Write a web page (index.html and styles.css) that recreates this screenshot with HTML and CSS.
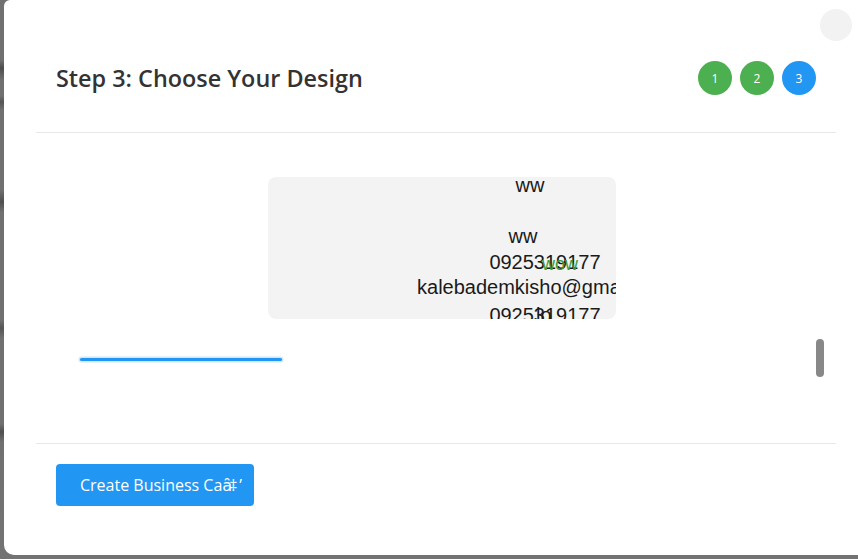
FILE: index.html
```html
<!DOCTYPE html>
<html>
<head>
<meta charset="utf-8">
<link rel="stylesheet" href="styles.css">
</head>
<body>
<div class="backdrop">
  <div class="modal">
    <button class="close" aria-label="Close"></button>
    <div class="header">
      <h2 class="title">Step 3: Choose Your Design</h2>
      <div class="steps">
        <span class="step done">1</span>
        <span class="step done">2</span>
        <span class="step active">3</span>
      </div>
    </div>
    <div class="body">
      <div class="preview-wrap">
        <div class="card">
          <div class="card-text">
            <div class="ln ln-a">ww</div>
            <div class="ln">&nbsp;</div>
            <div class="ln ln-b">ww</div>
            <div class="ln">0925319177</div>
            <div class="ln">kalebademkisho@gmail.com</div>
            <div class="ln ln-last">0925319177</div>
          </div>
          <span class="overlay wow">wow</span>
          <span class="overlay lo">lo</span>
        </div>
      </div>
      <div class="progress-row">
        <div class="progress"></div>
        <div class="thumb"></div>
      </div>
    </div>
    <div class="footer">
      <button class="create">Create Business Ca<span class="garble">ȃ</span><span class="garble2">‡</span>ʼ</button>
    </div>
  </div>
</div>
</body>
</html>
```
FILE: styles.css
```css
* { box-sizing: border-box; }
html, body { margin: 0; padding: 0; }
body {
  width: 858px;
  height: 559px;
  overflow: hidden;
  font-family: "Open Sans", "DejaVu Sans", sans-serif;
}
.backdrop {
  height: 559px;
  background: linear-gradient(to bottom,
    #707070 0, #707070 60px, #4d4d4d 68px, #707070 80px,
    #707070 96px, #555 102px, #707070 110px,
    #707070 190px, #4f4f4f 202px, #707070 212px,
    #707070 320px, #555 328px, #707070 338px,
    #707070 424px, #4f4f4f 432px, #707070 442px, #737373 559px);
  padding-left: 4px;
}
.modal {
  position: relative;
  width: 864px;
  height: 555px;
  background: #fff;
  border-radius: 6px 0 0 10px;
  padding: 24px 32px 0 32px;
}
.close {
  position: absolute;
  top: 9px;
  right: 16px;
  width: 32px;
  height: 32px;
  border: 0;
  border-radius: 50%;
  background: #f2f2f2;
  padding: 0;
}
.header {
  display: flex;
  align-items: center;
  justify-content: space-between;
  padding: 37px 20px;
  border-bottom: 1px solid #e8e8e8;
}
.title {
  margin: 0;
  font-size: 23.4px;
  font-weight: 600;
  color: #333;
  line-height: 34px;
}
.steps {
  display: flex;
  gap: 8px;
}
.step {
  width: 34px;
  height: 34px;
  border-radius: 50%;
  color: #fff;
  font-size: 12px;
  display: flex;
  align-items: center;
  justify-content: center;
}
.step.done { background: #4caf50; }
.step.active { background: #2196f3; }
.body {
  height: 311px;
  padding-top: 44px;
  border-bottom: 1px solid #e8e8e8;
}
.preview-wrap {
  display: flex;
  padding-left: 232px;
}
.card {
  position: relative;
  width: 348px;
  height: 142px;
  background: #f3f3f3;
  border-radius: 8px;
  overflow: hidden;
}
.card-text {
  width: 554px;
  margin-top: -4px;
  text-align: center;
  font-family: "Liberation Sans", Arial, sans-serif;
  font-size: 20px;
  line-height: 25.5px;
  color: #1a1a1a;
  white-space: nowrap;
}
.ln-a { padding-right: 30px; }
.ln-b { padding-right: 44px; }
.ln-last { margin-top: 2px; }
.overlay {
  position: absolute;
  font-family: "Liberation Sans", Arial, sans-serif;
  white-space: nowrap;
}
.wow {
  left: 274px;
  top: 77px;
  font-size: 18px;
  color: #3c9a3c;
}
.lo {
  left: 268px;
  top: 127px;
  font-size: 20px;
  color: #1a1a1a;
}
.progress-row {
  display: flex;
  align-items: center;
  justify-content: space-between;
  margin-top: 20px;
  height: 38px;
  padding: 0 12px 0 44px;
}
.progress {
  width: 202px;
  height: 3px;
  margin-top: 3px;
  background: #2196f3;
  border-radius: 2px;
  box-shadow: 0 0 0 1.5px #cfe6fb;
}
.thumb {
  width: 8px;
  height: 38px;
  background: #888;
  border-radius: 4px;
}
.footer {
  padding: 20px 20px;
}
.create {
  width: 198px;
  height: 42px;
  border: 0;
  border-radius: 4px;
  background: #2196f3;
  color: #fff;
  font-family: "Open Sans", "DejaVu Sans", sans-serif;
  font-size: 16px;
  text-align: left;
  padding: 0 0 0 24px;
  white-space: nowrap;
}
.garble { margin-right: -3px; }
.garble2 { margin-right: 2px; }
```
